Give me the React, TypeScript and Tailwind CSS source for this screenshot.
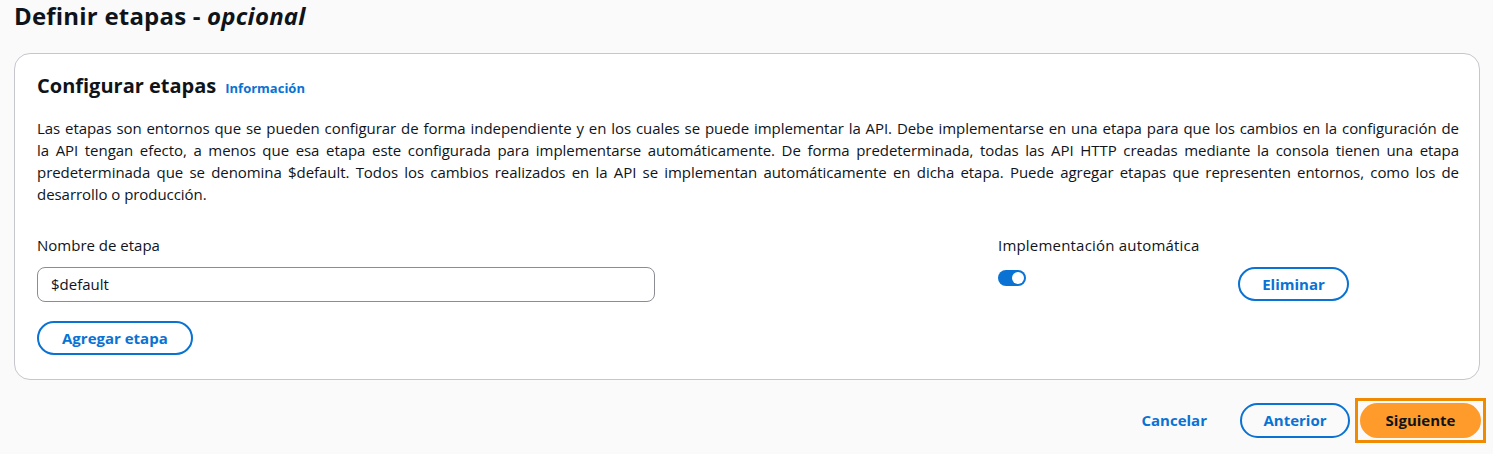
import React from "react";

const font = { fontFamily: '"Open Sans", "Noto Sans", Arial, sans-serif' };

const lines = [
  "Las etapas son entornos que se pueden configurar de forma independiente y en los cuales se puede implementar la API. Debe implementarse en una etapa para que los cambios en la configuración de",
  "la API tengan efecto, a menos que esa etapa este configurada para implementarse automáticamente. De forma predeterminada, todas las API HTTP creadas mediante la consola tienen una etapa",
  "predeterminada que se denomina $default. Todos los cambios realizados en la API se implementan automáticamente en dicha etapa. Puede agregar etapas que representen entornos, como los de",
];

const App: React.FC = () => {
  return (
    <div className="w-[1493px] h-[454px] bg-[#fafafa] text-[#0f141a] overflow-hidden" style={font}>
      <h1 className="pl-[14px] h-[53px] text-[24px] leading-[32px] font-bold tracking-[0.2px]">
        Definir etapas - <i className="font-bold">opcional</i>
      </h1>

      <section className="mx-[14px] w-[1466px] h-[327px] bg-white border border-[#c6c6cd] rounded-[16px] px-[22px] pt-[17px]">
        <div className="flex items-baseline gap-[9px]">
          <h2 className="text-[20px] leading-[30px] font-bold">Configurar etapas</h2>
          <a className="text-[13px] font-bold text-[#0972d3]">Información</a>
        </div>

        <p className="mt-[16px] w-[1422px] text-[15px] leading-[22px] tracking-[-0.05px]">
          {lines.map((l) => (
            <span key={l} className="block whitespace-nowrap text-justify [text-align-last:justify]">
              {l}
            </span>
          ))}
          <span className="block">desarrollo o producción.</span>
        </p>

        <div className="mt-[29px] flex">
          <div className="w-[618px]">
            <div className="text-[15px] leading-[22px]">Nombre de etapa</div>
            <div className="mt-[11px] h-[35px] border border-[#8c8c94] rounded-[8px] flex items-center px-[13px] text-[15px]">
              $default
            </div>
            <button className="mt-[19px] h-[34px] px-[23px] rounded-full border-2 border-[#0972d3] text-[#0972d3] text-[15px] font-bold">
              Agregar etapa
            </button>
          </div>

          <div className="ml-[343px] w-[240px]">
            <div className="text-[15px] leading-[22px] tracking-[0.2px]">Implementación automática</div>
            <div className="mt-[14px] w-[28px] h-[16px] rounded-full bg-[#0972d3] relative">
              <span className="absolute right-[2px] top-[2px] w-[12px] h-[12px] rounded-full bg-white" />
            </div>
          </div>

          <div className="pt-[33px]">
            <button className="h-[34px] w-[111px] rounded-full border-2 border-[#0972d3] text-[#0972d3] text-[15px] font-bold">
              Eliminar
            </button>
          </div>
        </div>
      </section>

      <div className="mt-[18px] flex justify-end items-center pr-[7px]">
        <button className="text-[#0972d3] text-[15px] font-bold mr-[33px]">Cancelar</button>
        <button className="h-[35px] w-[110px] rounded-full border-2 border-[#0972d3] text-[#0972d3] text-[15px] font-bold mr-[5px]">
          Anterior
        </button>
        <div className="border-[3px] border-[#f08a00] px-[2px] py-[2px]">
          <button className="h-[35px] w-[121px] rounded-full bg-[#ff9b2b] text-[#0f141a] text-[15px] font-bold">
            Siguiente
          </button>
        </div>
      </div>
    </div>
  );
};

export default App;
